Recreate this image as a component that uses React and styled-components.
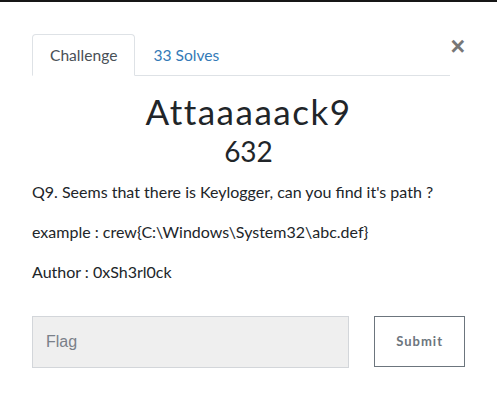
import React from 'react'
import styled, { createGlobalStyle } from 'styled-components'

const Global = createGlobalStyle`
  html, body {
    margin: 0;
    padding: 0;
    background: #fff;
  }
  body {
    font-family: Lato, "Liberation Sans", sans-serif;
    color: #212529;
  }
`

function App() {
  return (
    <>
      <Global />
      <Page>
        <TopStrip />
        <Modal>
          <Header>
            <Tabs>
              <Tab active>Challenge</Tab>
              <Tab>33 Solves</Tab>
            </Tabs>
            <Close aria-label="Close">×</Close>
          </Header>
          <Title>Attaaaaack9</Title>
          <Points>632</Points>
          <Description>
            <p>Q9. Seems that there is Keylogger, can you find it's path ?</p>
            <p>example : crew{'{'}C:\Windows\System32\abc.def{'}'}</p>
            <p>Author : 0xSh3rl0ck</p>
          </Description>
          <SubmitRow>
            <FlagInput placeholder="Flag" />
            <SubmitButton>Submit</SubmitButton>
          </SubmitRow>
        </Modal>
      </Page>
    </>
  )
}

export default App

const Page = styled.div`
  width: 497px;
  height: 415px;
  background: #fff;
  overflow: hidden;
`;
const TopStrip = styled.div`
  height: 2px;
  background: #161616;
`;
const Modal = styled.div`
  padding: 32px 32px 0 32px;
`;
const Header = styled.div`
  display: flex;
  align-items: flex-start;
`;
const Tabs = styled.ul`
  display: flex;
  list-style: none;
  margin: 0;
  padding: 0;
  width: 420px;
  border-bottom: 1px solid #dee2e6;
`;
const Tab = styled.li`
  height: 40px;
  padding: 0 17px;
  margin-bottom: -1px;
  display: flex;
  align-items: center;
  font-size: 15.6px;
  border: 1px solid ${p => (p.active ? '#dee2e6' : 'transparent')};
  border-bottom-color: ${p => (p.active ? '#fff' : 'transparent')};
  border-top-left-radius: 4px;
  border-top-right-radius: 4px;
  background: ${p => (p.active ? '#fff' : 'transparent')};
  color: ${p => (p.active ? '#495057' : '#337ab7')};
  cursor: pointer;
`;
const Close = styled.button`
  margin-left: auto;
  margin-top: 0;
  border: 0;
  background: none;
  padding: 0;
  font-family: "Liberation Sans", Arial, sans-serif;
  font-size: 25px;
  line-height: 24px;
  font-weight: 700;
  color: #777;
  cursor: pointer;
`;
const Title = styled.h3`
  margin: 15px 0 0 0;
  text-align: center;
  font-size: 35px;
  font-weight: 400;
  letter-spacing: 1.5px;
  line-height: 40px;
  color: #212529;
`;
const Points = styled.h4`
  margin: 4px 0 0 0;
  text-align: center;
  font-size: 28px;
  font-weight: 400;
  line-height: 32px;
  color: #212529;
`;
const Description = styled.div`
  margin-top: 13px;
  font-size: 16px;
  line-height: 24px;
  p {
    margin: 0 0 16px 0;
  }
`;
const SubmitRow = styled.div`
  display: flex;
  align-items: flex-start;
  margin-top: 32px;
`;
const FlagInput = styled.input`
  box-sizing: border-box;
  width: 318px;
  height: 52px;
  padding: 0 13px;
  background: #efefef;
  border: 1px solid #d3d6da;
  font-family: "Liberation Sans", Arial, sans-serif;
  font-size: 16px;
  color: #495057;
  outline: none;
  &::placeholder {
    color: #7a8089;
  }
`;
const SubmitButton = styled.button`
  box-sizing: border-box;
  margin-left: 25px;
  width: 91px;
  height: 51px;
  padding-bottom: 2px;
  background: #fff;
  border: 1px solid #6c757d;
  font-family: Lato, sans-serif;
  font-size: 13px;
  font-weight: 700;
  letter-spacing: 1px;
  color: #6c757d;
  cursor: pointer;
`;
